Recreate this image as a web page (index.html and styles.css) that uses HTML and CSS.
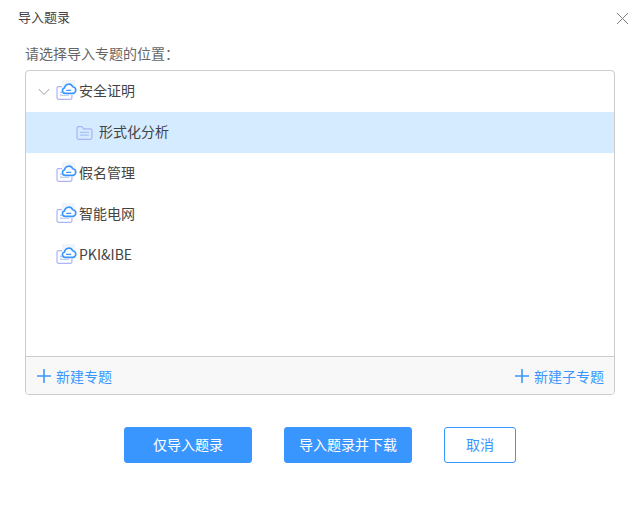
FILE: index.html
```html
<!DOCTYPE html>
<html lang="zh">
<head>
<meta charset="utf-8">
<title>导入题录</title>
<link rel="stylesheet" href="styles.css">
</head>
<body>
<svg class="defs" width="0" height="0" aria-hidden="true">
  <defs>
    <g id="folder-base" fill="none" stroke-width="1.2">
      <path d="M1 13.8V4.1a1.5 1.5 0 0 1 1.5-1.5h2.7c.6 0 1 .2 1.3.7l.9 1.5h7a1.5 1.5 0 0 1 1.5 1.5v7.5a1.5 1.5 0 0 1-1.5 1.5H2.5A1.5 1.5 0 0 1 1 13.8z" stroke="#aeb2f7"/>
      <path d="M4 8.4h9M4 11.2h9" stroke="#a9c4f7"/>
    </g>
    <g id="cloud">
      <rect x="0" y="0" width="13" height="15" fill="#f1f5f9"/>
      <path d="M3.4 13.4H3.1a2.8 2.8 0 0 1-.6-5.5 4.3 4.3 0 0 1 8.2-1.2 3.4 3.4 0 0 1 .4 6.7H3.4z" fill="#fff" stroke="#3a96ff" stroke-width="1.6" stroke-linejoin="round"/>
      <path d="M4.2 10.4h5" stroke="#3a96ff" stroke-width="1.2" fill="none"/>
    </g>
  </defs>
</svg>
<main class="dialog">
  <header class="head">
    <h1 class="title">导入题录</h1>
    <button class="close" aria-label="关闭">
      <svg width="13" height="13" viewBox="0 0 13 13"><path d="M1 1l11 11M12 1L1 12" stroke="#7d7d7d" stroke-width="1" fill="none"/></svg>
    </button>
  </header>
  <p class="hint">请选择导入专题的位置：</p>
  <section class="panel">
    <ul class="tree">
      <li class="row">
        <svg class="caret" width="12" height="8" viewBox="0 0 12 8"><path d="M.7 1l5.3 5.5L11.3 1" stroke="#9aa3ad" stroke-width="1" fill="none"/></svg>
        <svg class="ico" width="20" height="18" viewBox="0 0 20 18"><use href="#folder-base" y="1"/><use href="#cloud" x="6" y="-3"/></svg>
        <span class="label">安全证明</span>
      </li>
      <li class="row sub selected">
        <svg class="ico" width="20" height="18" viewBox="0 0 20 18"><use href="#folder-base"/></svg>
        <span class="label">形式化分析</span>
      </li>
      <li class="row top">
        <svg class="ico" width="20" height="18" viewBox="0 0 20 18"><use href="#folder-base" y="1"/><use href="#cloud" x="6" y="-3"/></svg>
        <span class="label">假名管理</span>
      </li>
      <li class="row top">
        <svg class="ico" width="20" height="18" viewBox="0 0 20 18"><use href="#folder-base" y="1"/><use href="#cloud" x="6" y="-3"/></svg>
        <span class="label">智能电网</span>
      </li>
      <li class="row top">
        <svg class="ico" width="20" height="18" viewBox="0 0 20 18"><use href="#folder-base" y="1"/><use href="#cloud" x="6" y="-3"/></svg>
        <span class="label">PKI&amp;IBE</span>
      </li>
    </ul>
    <footer class="tools">
      <a class="add"><svg width="14" height="14" viewBox="0 0 14 14"><path d="M7 0v14M0 7h14" stroke="#3a96ff" stroke-width="1.6"/></svg>新建专题</a>
      <a class="add"><svg width="14" height="14" viewBox="0 0 14 14"><path d="M7 0v14M0 7h14" stroke="#3a96ff" stroke-width="1.6"/></svg>新建子专题</a>
    </footer>
  </section>
  <div class="actions">
    <button class="btn primary wide">仅导入题录</button>
    <button class="btn primary wide">导入题录并下载</button>
    <button class="btn ghost">取消</button>
  </div>
</main>
</body>
</html>
```

FILE: styles.css
```css
* { box-sizing: border-box; }
html, body { margin: 0; background: #fff; }
body {
  width: 639px;
  height: 509px;
  overflow: hidden;
  font-family: "Noto Sans CJK SC", "Noto Sans", sans-serif;
  color: #333;
}
.defs { position: absolute; }
.dialog { padding: 0 24px 0 25px; }
.head {
  display: flex;
  justify-content: space-between;
  align-items: center;
  height: 36px;
  margin: 0 -24px 0 -7px;
}
.title { margin: 0 0 2px; font-size: 13px; font-weight: 400; line-height: 20px; color: #444; }
.close {
  display: flex;
  border: 0;
  padding: 0;
  margin: 1px 10px 0 0;
  background: none;
}
.hint { margin: 7px 0 6px; font-size: 14px; line-height: 21px; color: #666; }
.panel {
  display: flex;
  flex-direction: column;
  height: 325px;
  border: 1px solid #ccc;
  border-radius: 4px;
  overflow: hidden;
}
.tree { flex: 1; margin: 0; padding: 0; list-style: none; }
.row {
  display: flex;
  align-items: center;
  height: 41px;
  padding-left: 12px;
  font-size: 14px;
  color: #444;
}
.label { margin-bottom: 4px; }
.caret { margin-right: 6px; }
.ico { margin-right: 3px; overflow: visible; }
.top { padding-left: 30px; }
.sub { padding-left: 50px; }
.selected { background: #d5ebff; }
.tools {
  display: flex;
  justify-content: space-between;
  align-items: center;
  height: 38px;
  padding: 0 10px 0 11px;
  background: #f8f8f8;
  border-top: 1px solid #ccc;
}
.add {
  display: flex;
  align-items: center;
  gap: 5px;
  font-size: 14px;
  color: #3a96ff;
}
.actions {
  display: flex;
  justify-content: center;
  gap: 32px;
  margin: 32px 0 0;
}
.btn {
  height: 36px;
  border-radius: 3px;
  font: inherit;
  font-size: 14px;
  padding: 0 0 2px;
}
.primary { border: 1px solid #3a96ff; background: #3a96ff; color: #fff; }
.wide { width: 128px; }
.ghost { width: 72px; border: 1px solid #3a96ff; background: #fff; color: #3a96ff; }
```
